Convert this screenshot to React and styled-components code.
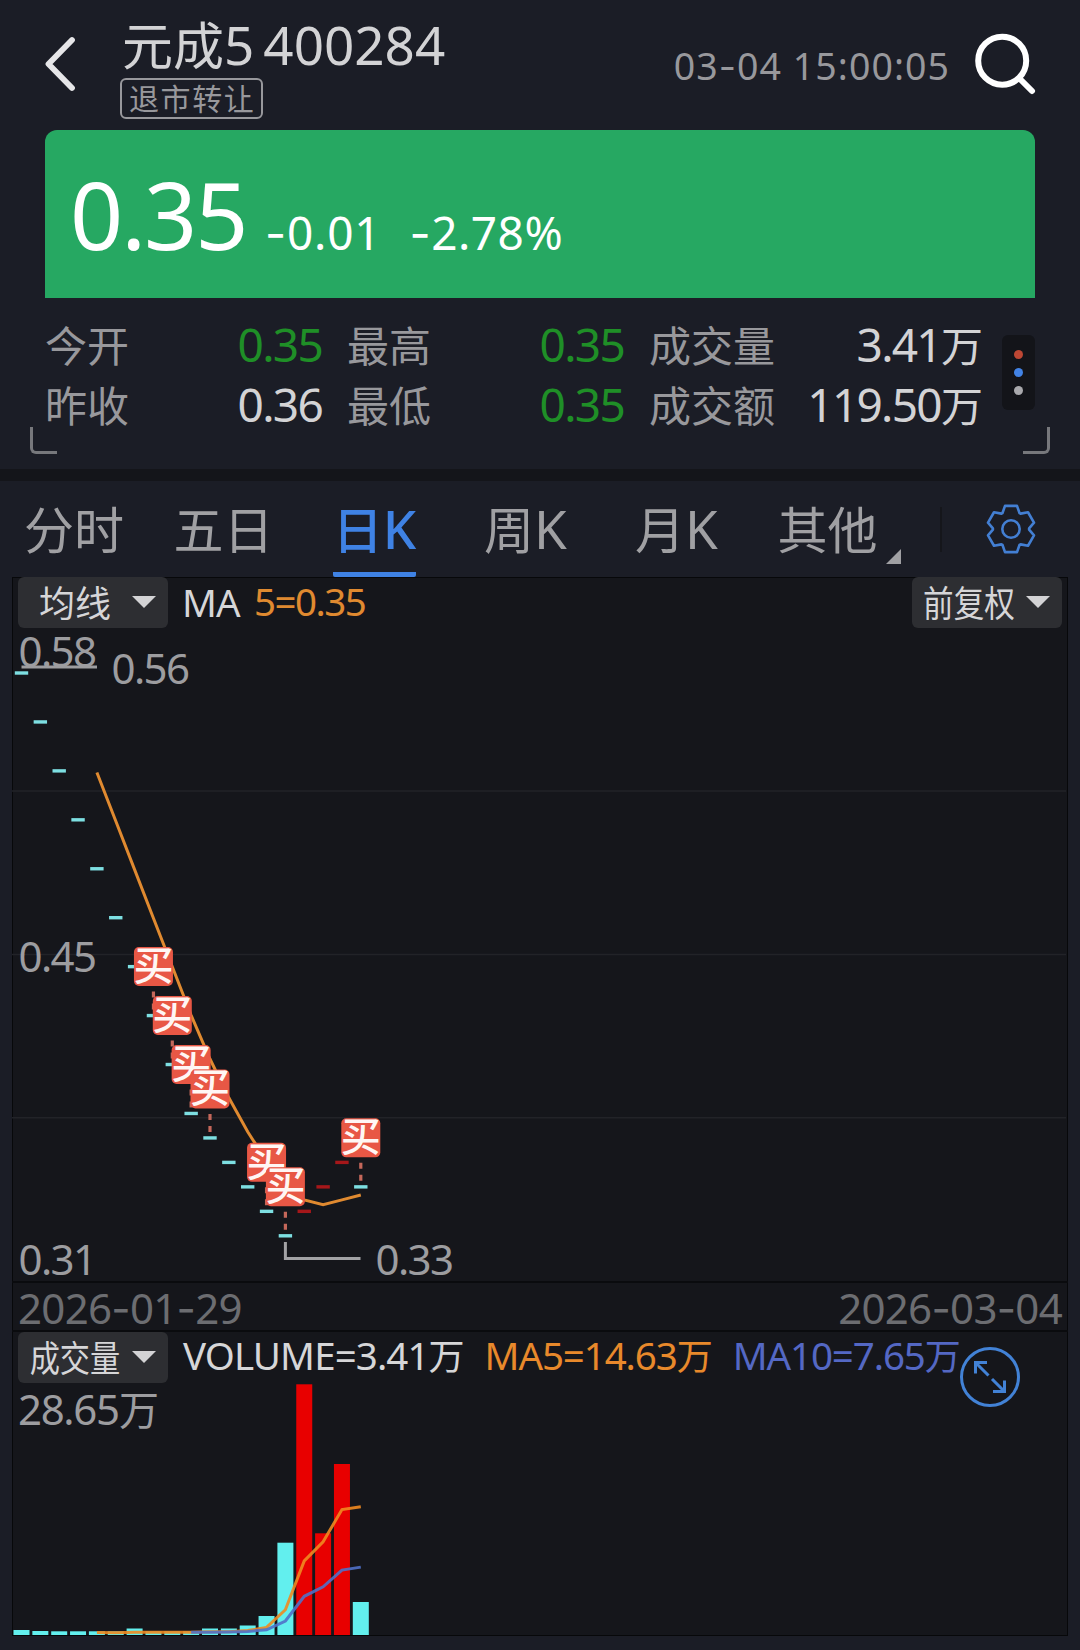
import React from 'react';
import styled, { createGlobalStyle } from 'styled-components';

const prices = [0.56, 0.54, 0.52, 0.5, 0.48, 0.46, 0.44, 0.42, 0.4, 0.38, 0.37, 0.36, 0.35, 0.34, 0.33, 0.34, 0.35, 0.36, 0.35];
const volumes = [5, 4, 3.7, 3.7, 3.7, 3.7, 6.5, 3.7, 3.7, 3.7, 6.5, 6.5, 9.5, 19, 92.3, 250.7, 101.7, 171, 33];
const rising = [15, 16, 17];
const buys = [7, 8, 9, 10, 13, 14, 18];

const CYAN = '#7ddfe2';
const FONT = "'Noto Sans', 'Noto Sans CJK SC', sans-serif";

// the plots start 12px from the left edge of the screen
const barX = (i) => 9.5 + 18.85 * i;
const priceY = (p) => 45 + (0.56 - p) * 2447;
const maY = (p) => 144.5 + (0.52 - p) * 2428;

const average = (list, size) =>
  list
    .map((_, i) => (i < size - 1 ? null : list.slice(i - size + 1, i + 1).reduce((a, b) => a + b, 0) / size))
    .map((v, i) => ({ v, i }))
    .filter((p) => p.v !== null);

const toPoints = (list, y) => list.map(({ v, i }) => `${barX(i)},${y(v)}`).join(' ');

const stats = [
  [
    { label: '今开', value: '0.35', color: '#1f8f27' },
    { label: '昨收', value: '0.36' },
  ],
  [
    { label: '最高', value: '0.35', color: '#1f8f27' },
    { label: '最低', value: '0.35', color: '#1f8f27' },
  ],
  [
    { label: '成交量', value: '3.41', unit: '万' },
    { label: '成交额', value: '119.50', unit: '万' },
  ],
];

const tabs = [
  { zh: '分时' },
  { zh: '五日' },
  { zh: '日', en: 'K', active: true },
  { zh: '周', en: 'K' },
  { zh: '月', en: 'K' },
  { zh: '其他', more: true },
];

const gearPoints = Array.from({ length: 6 })
  .flatMap((_, i) => {
    const a = (i * Math.PI) / 3;
    return [[-8.5, -16], [-6, -23.1], [6, -23.1], [8.5, -16]].map(
      ([x, y]) => `${25 + x * Math.cos(a) - y * Math.sin(a)},${25 + x * Math.sin(a) + y * Math.cos(a)}`
    );
  })
  .join(' ');

// hyphens are set in a wider face than the digits
const Dashed = ({ children }) =>
  children.split(/(-)/).map((part, i) => (part === '-' ? <Hyphen key={i}>-</Hyphen> : part));

const Dropdown = ({ label, squeeze = 1 }) => (
  <StyledDropdown>
    <DropdownText $squeeze={squeeze}>{label}</DropdownText>
    <Caret />
  </StyledDropdown>
);

const PriceChart = () => (
  <Plot width="1054" height="653" viewBox="0 0 1054 653">
    {[163, 326.5, 489.7].map((y) => (
      <line key={y} x1="0" x2="1054" y1={y} y2={y} stroke="#222328" strokeWidth="1.5" />
    ))}
    <g fill="#9d9da0" fontSize="42">
      <text x="6.5" y="38.5" textLength="78.5">0.58</text>
      <text x="99.5" y="55.5" textLength="78.5">0.56</text>
      <text x="6.5" y="343.5" textLength="78.5">0.45</text>
      <text x="6.5" y="647" textLength="78.5">0.31</text>
      <text x="363.5" y="647" textLength="78.5">0.33</text>
    </g>
    <line x1="9.5" x2="85" y1="39" y2="39" stroke="#9d9da0" strokeWidth="3" />
    <polyline points={`${barX(14)},614 ${barX(14)},630.5 348.5,630.5`} fill="none" stroke="#a2a2a5" strokeWidth="3" />
    {prices.map((p, i) => (
      <rect
        key={i}
        x={barX(i) - 6.7}
        y={priceY(p) - 1.7}
        width="13.4"
        height="3.4"
        fill={rising.includes(i) ? '#a5171a' : CYAN}
      />
    ))}
    <polyline points={toPoints(average(prices, 5), maY)} fill="none" stroke="#e08a30" strokeWidth="3" />
    {buys.map((i) => {
      const x = barX(i);
      const y = priceY(prices[i]);
      return (
        <g key={i}>
          <line x1={x} x2={x} y1={y - 24} y2={y - 5} stroke="#c4675a" strokeWidth="3.2" strokeDasharray="6 6" />
          <rect x={x - 19.5} y={y - 68.5} width="39" height="39" rx="5" fill="#e85745" />
          <text x={x} y={y - 35.5} textAnchor="middle" fontSize="40" fontWeight="500" fill="#fff6f4">买</text>
        </g>
      );
    })}
  </Plot>
);

const VolumeChart = () => (
  <Plot width="1054" height="252" viewBox="0 0 1054 252">
    <text x="6" y="41.5" fill="#9d9da0" fontSize="42">
      <tspan textLength="102">28.65</tspan>
      <tspan x="107" fontSize="40">万</tspan>
    </text>
    {volumes.map((h, i) => (
      <rect key={i} x={barX(i) - 8} y={252 - h} width="16" height={h} fill={rising.includes(i) ? '#e80000' : '#62efee'} />
    ))}
    <polyline points={toPoints(average(volumes, 5), (v) => 253.5 - v)} fill="none" stroke="#f08a20" strokeOpacity="0.9" strokeWidth="3" />
    <polyline points={toPoints(average(volumes, 10), (v) => 253.5 - v)} fill="none" stroke="#5070c8" strokeOpacity="0.9" strokeWidth="3" />
  </Plot>
);

const App = () => {
  return (
    <Screen>
      <GlobalStyle />
      <Header>
        <BackIcon width="32" height="58" viewBox="0 0 32 58" fill="none">
          <path d="M28 5 4.500 29 28 53" stroke="#e6e6e8" strokeWidth="5.8" strokeLinecap="round" strokeLinejoin="round" />
        </BackIcon>
        <div>
          <Title>
            <Zh $size={51}>元成</Zh>
            <Num $size={53} $gap={-1}>5</Num>
            <Code>400284</Code>
          </Title>
          <Tag>退市转让</Tag>
        </div>
        <Time><Dashed>03-04 15:00:05</Dashed></Time>
        <SearchIcon width="64" height="64" viewBox="0 0 64 64" fill="none" stroke="#fff">
          <circle cx="28.2" cy="29.7" r="24" strokeWidth="6" />
          <path d="M46 48l12 12" strokeWidth="6" strokeLinecap="round" />
        </SearchIcon>
      </Header>

      <Quote>
        <Num $size={93} $gap={-2}>0.35</Num>
        <Change $left={18.5} $gap={0.8}><Dashed>-0.01</Dashed></Change>
        <Change $left={28} $gap={0.5}><Dashed>-2.78%</Dashed></Change>
      </Quote>

      <Stats>
        {stats.map((col, i) => (
          <StatColumn key={i} $wide={i === 2}>
            {col.map((s) => (
              <Stat key={s.label}>
                <Zh $size={42}>{s.label}</Zh>
                <StatValue $color={s.color} $inset={s.unit ? 0 : 2}>
                  {s.value}
                  {s.unit && <Zh $size={42}>{s.unit}</Zh>}
                </StatValue>
              </Stat>
            ))}
          </StatColumn>
        ))}
        <More>
          <Dot $color="#bd4734" />
          <Dot $color="#4283e6" />
          <Dot $color="#a9a9ad" />
        </More>
        <Corner $side="left" />
        <Corner $side="right" />
      </Stats>

      <Divider />

      <Tabs>
        {tabs.map((t) => (
          <Tab key={t.zh} $active={t.active}>
            <TabLabel $active={t.active}>
              <Zh $size={50}>{t.zh}</Zh>
              {t.en}
            </TabLabel>
            {t.more && <MoreMark />}
          </Tab>
        ))}
        <TabDivider />
        <Gear width="50" height="50" viewBox="0 0 50 50" fill="none" stroke="#437fd3" strokeWidth="2.6" strokeLinejoin="round">
          <polygon points={gearPoints} />
          <circle cx="25" cy="25" r="8.700" />
        </Gear>
      </Tabs>

      <Charts>
        <ChartBar>
          <Dropdown label="均线" />
          <Legend $color="#d6d6d8" $left={14} $gap={-0.8}>MA</Legend>
          <Legend $color="#e08a30" $left={14} $gap={-1.5} $drop={-1}>5=0.35</Legend>
          <Spacer />
          <Dropdown label="前复权" squeeze={0.85} />
        </ChartBar>
        <PriceChart />
        <Dates>
          <span><Dashed>2026-01-29</Dashed></span>
          <span><Dashed>2026-03-04</Dashed></span>
        </Dates>
        <ChartBar>
          <Dropdown label="成交量" squeeze={0.84} />
          <Legend $color="#d6d6d8" $left={15} $gap={-0.9} $drop={-2}>VOLUME=3.41<Zh $size={36}>万</Zh></Legend>
          <Legend $color="#e8892b" $left={20} $gap={-1.1} $drop={-2}>MA5=14.63<Zh $size={36}>万</Zh></Legend>
          <Legend $color="#5468c4" $left={20} $gap={-1.1} $drop={-2}>MA10=7.65<Zh $size={36}>万</Zh></Legend>
          <Expand width="64" height="64" viewBox="0 0 64 64" fill="none" stroke="#4282d6" strokeWidth="3">
            <circle cx="32" cy="32" r="28.500" />
            <path d="M30.500 30.500 18 18M17.500 28.500V17.500H29M34 34l13 13M46.500 35.500v11H35" />
          </Expand>
        </ChartBar>
        <VolumeChart />
      </Charts>
    </Screen>
  );
};

const GlobalStyle = createGlobalStyle`
  body {
    margin: 0;
    background: #1b1d26;
  }
`;

const Screen = styled.div`
  width: 1080px;
  height: 1650px;
  overflow: hidden;
  background: #1b1d26;
  color: #d3d3d5;
  font-family: ${FONT};
  white-space: nowrap;
`;

const Zh = styled.span`
  font-size: ${(p) => p.$size}px;
  letter-spacing: 0;
`;

const Num = styled.span`
  font-size: ${(p) => p.$size}px;
  letter-spacing: ${(p) => p.$gap || 0}px;
`;

const Hyphen = styled.span`
  font-family: Inter, sans-serif;
`;

const Header = styled.header`
  display: flex;
  align-items: flex-start;
  height: 130px;
  padding: 0 42px 0 44px;
`;

const BackIcon = styled.svg`
  margin: 35px 44px 0 0;
`;

const Title = styled.div`
  margin: 11px 0 -1px 2px;
  font-size: 53px;
  line-height: 68px;
`;

const Code = styled.span`
  margin-left: 10px;
`;

const Tag = styled.div`
  box-sizing: border-box;
  width: 143px;
  height: 41px;
  padding-left: 7px;
  border: 2px solid #98989c;
  border-radius: 6px;
  color: #98989c;
  font-size: 30px;
  line-height: 38px;
  letter-spacing: 1.6px;
`;

const Time = styled.div`
  margin: 45px 24px 0 auto;
  color: #98989c;
  font-size: 37.5px;
  line-height: 41px;
  letter-spacing: 1.05px;
`;

const SearchIcon = styled.svg`
  margin-top: 31px;
`;

const Quote = styled.section`
  height: 168px;
  margin: 0 45px;
  padding-left: 25px;
  border-radius: 12px 12px 0 0;
  background: #26a862;
  color: #fff;
  font-size: 93px;
  line-height: 168px;
`;

const Change = styled.span`
  margin-left: ${(p) => p.$left}px;
  font-size: 46px;
  letter-spacing: ${(p) => p.$gap || 0}px;
`;

const Stats = styled.section`
  position: relative;
  box-sizing: border-box;
  display: flex;
  gap: 23px;
  height: 171px;
  padding: 17px 45px 0 45px;
`;

const StatColumn = styled.div`
  width: ${(p) => (p.$wide ? 334 : 279)}px;
`;

const Stat = styled.div`
  display: flex;
  align-items: baseline;
  justify-content: space-between;
  height: 59.5px;
  color: #98989c;
  font-size: 46px;
  line-height: 59px;
`;

const StatValue = styled.span`
  margin-right: ${(p) => p.$inset}px;
  color: ${(p) => p.$color || '#d3d3d5'};
  letter-spacing: -1.7px;
`;

const More = styled.div`
  display: flex;
  flex-direction: column;
  align-items: center;
  justify-content: center;
  gap: 9px;
  width: 33px;
  height: 75px;
  margin: 20px 0 0 -4px;
  border-radius: 6px;
  background: #131419;
`;

const Dot = styled.i`
  width: 9px;
  height: 9px;
  border-radius: 50%;
  background: ${(p) => p.$color};
`;

const Corner = styled.i`
  position: absolute;
  bottom: 15px;
  ${(p) => p.$side}: 30px;
  width: 24px;
  height: 24px;
  border-bottom: 3px solid #77787c;
  border-${(p) => p.$side}: 3px solid #77787c;
  border-bottom-${(p) => p.$side}-radius: 6px;
`;

const Divider = styled.div`
  height: 12px;
  background: #14151a;
`;

const Tabs = styled.nav`
  display: flex;
  align-items: center;
  height: 96px;
`;

const Tab = styled.div`
  position: relative;
  display: flex;
  justify-content: center;
  width: 151px;
  height: 96px;
  color: ${(p) => (p.$active ? '#3f82e4' : '#a0a0a3')};

  &:first-child {
    width: 148px;
  }
`;

const TabLabel = styled.span`
  box-sizing: border-box;
  height: 96px;
  font-size: 53px;
  font-weight: ${(p) => (p.$active ? 500 : 400)};
  line-height: 96px;
  border-radius: 2px;
  background: ${(p) => (p.$active ? 'linear-gradient(#3f82e4, #3f82e4) bottom / 100% 5px no-repeat' : 'none')};
`;

const MoreMark = styled.i`
  position: absolute;
  right: 2px;
  bottom: 13px;
  border-left: 15px solid transparent;
  border-bottom: 15px solid #a0a0a3;
`;

const TabDivider = styled.div`
  width: 2px;
  height: 45px;
  margin: 0 44px 0 37px;
  background: #15161b;
`;

const Gear = styled.svg`
  flex: none;
`;

const Charts = styled.section`
  box-sizing: border-box;
  width: 1056px;
  height: 1059px;
  margin-left: 12px;
  box-shadow: inset 0 0 0 1px #07080a;
  background: #15161b;
`;

const ChartBar = styled.div`
  display: flex;
  align-items: flex-start;
  height: 51px;
  padding: 0 6px;
`;

const StyledDropdown = styled.div`
  display: flex;
  flex: none;
  align-items: center;
  box-sizing: border-box;
  width: 150px;
  height: 51px;
  border-radius: 6px;
  background: #2d2e32;
`;

const DropdownText = styled.span`
  width: 114px;
  transform: scaleX(${(p) => p.$squeeze});
  text-align: center;
  color: #d6d6d8;
  font-size: 36px;
  line-height: 51px;
  padding-top: 1px;
`;

const Caret = styled.i`
  margin-top: -1px;
  border: 12px solid transparent;
  border-top-color: #d3d3d5;
  border-bottom: 0;
`;

const Legend = styled.span`
  flex: none;
  margin: ${(p) => p.$drop || 0}px 0 0 ${(p) => p.$left}px;
  color: ${(p) => p.$color};
  font-size: 38.5px;
  line-height: 51px;
  letter-spacing: ${(p) => p.$gap}px;
`;

const Spacer = styled.div`
  flex: 1;
`;

const Plot = styled.svg`
  display: block;
  font-family: ${FONT};
`;

const Dates = styled.div`
  box-sizing: border-box;
  display: flex;
  justify-content: space-between;
  height: 51px;
  padding: 0 6px;
  border-top: 2px solid #0a0b0e;
  border-bottom: 2px solid #0a0b0e;
  color: #6c6d71;
  font-size: 42px;
  line-height: 49px;
  letter-spacing: -0.7px;
`;

// sits partly over the end of the legend
const Expand = styled.svg`
  position: absolute;
  left: 958px;
  margin-top: 13px;
`;

export default App;
